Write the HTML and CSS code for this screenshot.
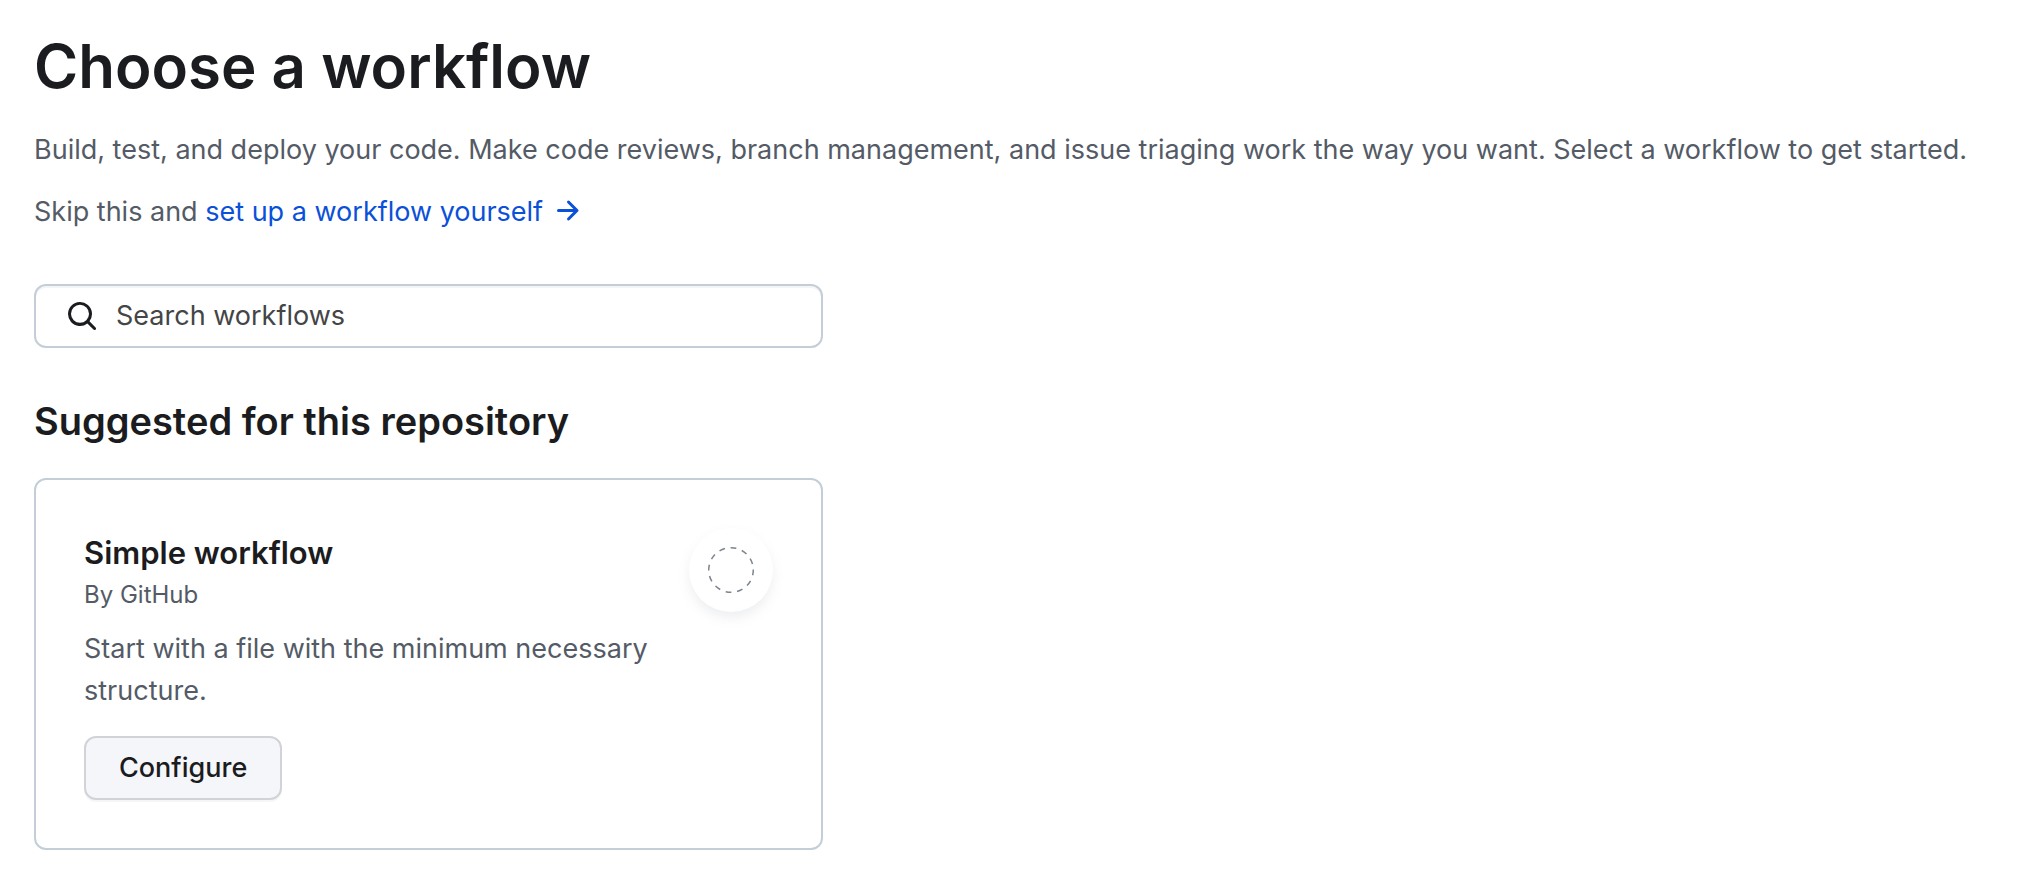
FILE: index.html
```html
<!DOCTYPE html>
<html lang="en">
<head>
<meta charset="utf-8">
<meta name="viewport" content="width=device-width, initial-scale=1">
<title>Choose a workflow</title>
<link rel="stylesheet" href="styles.css">
</head>
<body>
<main class="page">
  <h1 class="page-title">Choose a workflow</h1>
  <p class="lead">Build, test, and deploy your code. Make code reviews, branch management, and issue triaging work the way you want. Select a workflow to get started.</p>
  <p class="lead">Skip this and <a class="link" href="#">set up a workflow yourself <svg class="arrow" viewBox="0 0 16 16" width="32" height="32" aria-hidden="true"><path fill="currentColor" d="M8.22 2.97a.75.75 0 0 1 1.06 0l4.25 4.25a.75.75 0 0 1 0 1.06l-4.25 4.25a.751.751 0 0 1-1.042-.018.751.751 0 0 1-.018-1.042l2.97-2.97H3.75a.75.75 0 0 1 0-1.5h7.44L8.22 4.03a.75.75 0 0 1 0-1.06Z"/></svg></a></p>

  <form class="search" role="search">
    <label class="search-icon" for="q" aria-label="Search workflows"><svg viewBox="0 0 16 16" width="32" height="32" aria-hidden="true"><path fill="currentColor" d="M10.68 11.74a6 6 0 0 1-7.922-8.982 6 6 0 0 1 8.982 7.922l3.04 3.04a.749.749 0 0 1-.326 1.275.749.749 0 0 1-.734-.215ZM11.5 7a4.499 4.499 0 1 0-8.997 0A4.499 4.499 0 0 0 11.5 7Z"/></svg></label>
    <input class="search-input" id="q" type="text" placeholder="Search workflows">
  </form>

  <section>
    <h2 class="section-title">Suggested for this repository</h2>
    <article class="card">
      <div class="card-body">
        <h3 class="card-title">Simple workflow</h3>
        <p class="card-author">By GitHub</p>
        <p class="card-text">Start with a file with the minimum necessary structure.</p>
        <button class="button" type="button">Configure</button>
      </div>
      <div class="badge">
        <svg viewBox="0 0 48 48" width="48" height="48" aria-hidden="true"><circle cx="24" cy="24" r="22.3" fill="none" stroke="#7d848e" stroke-width="1.5" pathLength="120" stroke-dasharray="5 5" transform="rotate(-1 24 24)"/></svg>
      </div>
    </article>
  </section>
</main>
</body>
</html>
```
FILE: styles.css
```css
* {
  box-sizing: border-box;
}

body {
  margin: 0;
  background: #fff;
  color: #1b1c20;
  font-family: Inter, "Liberation Sans", sans-serif;
  font-size: 27px;
  line-height: 42px;
}

h1, h2, h3, p {
  margin: 0;
}

.page {
  padding: 26px 34px;
}

.page-title {
  margin-bottom: 23px;
  font-size: 60px;
  font-weight: 600;
  line-height: 80px;
}

.lead {
  margin-bottom: 20px;
  color: #545b66;
}

.link {
  color: #0b50d9;
  text-decoration: none;
}

.arrow {
  vertical-align: -6px;
}

.search {
  display: flex;
  align-items: center;
  gap: 18px;
  max-width: 789px;
  height: 64px;
  margin: 51px 0 48px;
  padding: 0 30px;
  border: 2px solid #c4ced8;
  border-radius: 12px;
  box-shadow: inset 0 2px 0 #f3f5f7;
}

.search-icon {
  display: flex;
}

.search-input {
  flex: 1;
  min-width: 0;
  padding: 0;
  border: 0;
  outline: 0;
  background: transparent;
  color: inherit;
  font: inherit;
}

.search-input::placeholder {
  color: #444546;
  opacity: 1;
}

.section-title {
  margin-bottom: 32px;
  font-size: 38px;
  font-weight: 600;
  line-height: 50px;
}

.card {
  display: flex;
  gap: 32px;
  max-width: 789px;
  padding: 48px;
  border: 2px solid #c4ced8;
  border-radius: 12px;
}

.card-body {
  flex: 1;
}

.card-title {
  font-size: 31px;
  font-weight: 600;
  line-height: 50px;
}

.card-author {
  margin-bottom: 16px;
  color: #545b66;
  font-size: 24px;
  line-height: 34px;
}

.card-text {
  margin-bottom: 24px;
  color: #545b66;
}

.button {
  display: block;
  height: 64px;
  padding: 0 33px;
  border: 2px solid #d1d3d8;
  border-radius: 12px;
  background: #f5f6fa;
  box-shadow: 0 2px 0 #f5f6f6;
  color: #1b1c20;
  font: inherit;
  font-weight: 500;
}

.badge {
  display: flex;
  flex: none;
  align-items: center;
  justify-content: center;
  width: 84px;
  height: 84px;
  border-radius: 50%;
  background: #fff;
  box-shadow: 0 6px 12px rgba(140, 149, 159, 0.15);
}
```
